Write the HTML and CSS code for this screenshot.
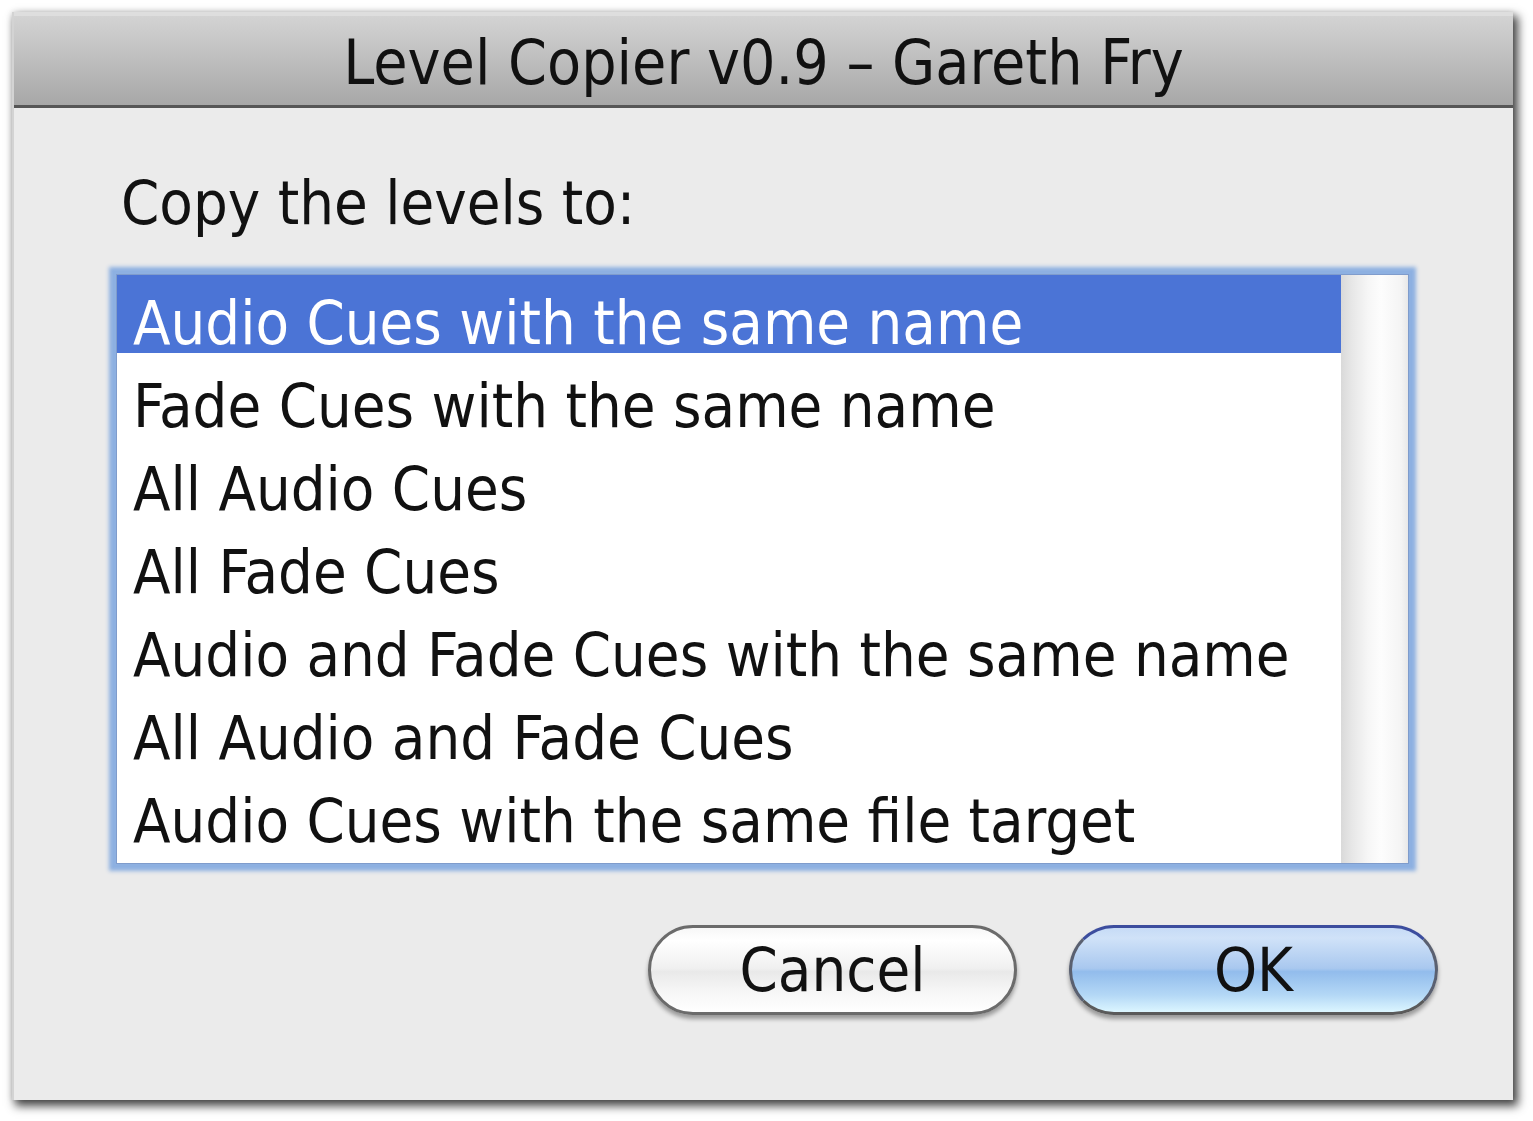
FILE: index.html
```html
<!DOCTYPE html>
<html>
<head>
<meta charset="utf-8">
<title>Level Copier v0.9 – Gareth Fry</title>
<link rel="stylesheet" href="styles.css">
</head>
<body>
<div class="window">
  <div class="titlebar">Level Copier v0.9 – Gareth Fry</div>
  <div class="content">
    <div class="label">Copy the levels to:</div>
    <div class="list">
      <div class="rows">
        <div class="row selected">Audio Cues with the same name</div>
        <div class="row">Fade Cues with the same name</div>
        <div class="row">All Audio Cues</div>
        <div class="row">All Fade Cues</div>
        <div class="row">Audio and Fade Cues with the same name</div>
        <div class="row">All Audio and Fade Cues</div>
        <div class="row">Audio Cues with the same file target</div>
      </div>
      <div class="scrolltrack"></div>
    </div>
    <div class="buttons">
      <div class="btn cancel">Cancel</div>
      <div class="btn ok">OK</div>
    </div>
  </div>
</div>
</body>
</html>
```
FILE: styles.css
```css
html, body {
  margin: 0;
  padding: 0;
  background: #ffffff;
}
body {
  width: 1533px;
  height: 1121px;
  overflow: hidden;
  font-family: "DejaVu Sans", "Noto Sans", sans-serif;
  font-stretch: condensed;
  color: #111;
}
.window {
  margin: 12px 0 0 12px;
  width: 1501px;
  height: 1088px;
  background: #ebebeb;
  border-left: 2px solid #d3d3d3;
  box-sizing: border-box;
  box-shadow: 4px 5px 9px 1px rgba(0,0,0,0.72), 0 0 6px rgba(0,0,0,0.12);
  display: flex;
  flex-direction: column;
}
.titlebar {
  height: 96px;
  box-sizing: border-box;
  padding-top: 11px;
  line-height: 72px;
  font-size: 62px;
  text-align: center;
  border-top: 4px solid #dedede;
  border-bottom: 3px solid #565656;
  background: linear-gradient(#d3d3d3, #c0c0c0 45%, #a7a7a7);
  color: #111;
}
.content {
  padding: 59px 0 0 103px;
  display: flex;
  flex-direction: column;
}
.label {
  font-size: 61px;
  line-height: 72px;
  padding-left: 4px;
}
.list {
  margin-top: 36px;
  width: 1291px;
  height: 588px;
  box-sizing: border-box;
  background: #fff;
  display: flex;
  box-shadow: 0 0 0 1px #7f9ccc, 0 0 4px 8px #8db0e1;
}
.rows {
  flex: 1;
  display: flex;
  flex-direction: column;
  gap: 5px;
}
.row {
  height: 78px;
  box-sizing: border-box;
  padding: 15px 0 0 16px;
  font-size: 61px;
  line-height: 66px;
  white-space: nowrap;
}
.row.selected {
  background: #4b74d6;
  color: #fff;
}
.scrolltrack {
  width: 67px;
  background: linear-gradient(90deg, #d9d9d9, #e6e6e6 15%, #f6f6f6 40%, #fdfdfd 60%, #f4f4f4 90%, #e8e8e8);
}
.buttons {
  margin-top: 62px;
  padding-right: 75px;
  display: flex;
  justify-content: flex-end;
  gap: 52px;
}
.btn {
  width: 369px;
  height: 90px;
  box-sizing: border-box;
  border-radius: 45px;
  border: 3px solid #6b6b6b;
  display: flex;
  align-items: center;
  justify-content: center;
  font-size: 61px;
  line-height: 62px;
  box-shadow: 0 4px 4px rgba(0,0,0,0.35);
}
.cancel {
  background: linear-gradient(#f7f7f7, #ffffff 15%, #f0f0f0 48%, #e9e9e9 52%, #f6f6f6 75%, #ffffff);
}
.ok {
  border-color: #3c4d9e #5a6070 #5a5a5a;
  background: linear-gradient(#c6dbf6, #d0e2f8 12%, #a9c8ef 48%, #92bcec 52%, #b4d8f6 80%, #dcf6ff);
}
```
